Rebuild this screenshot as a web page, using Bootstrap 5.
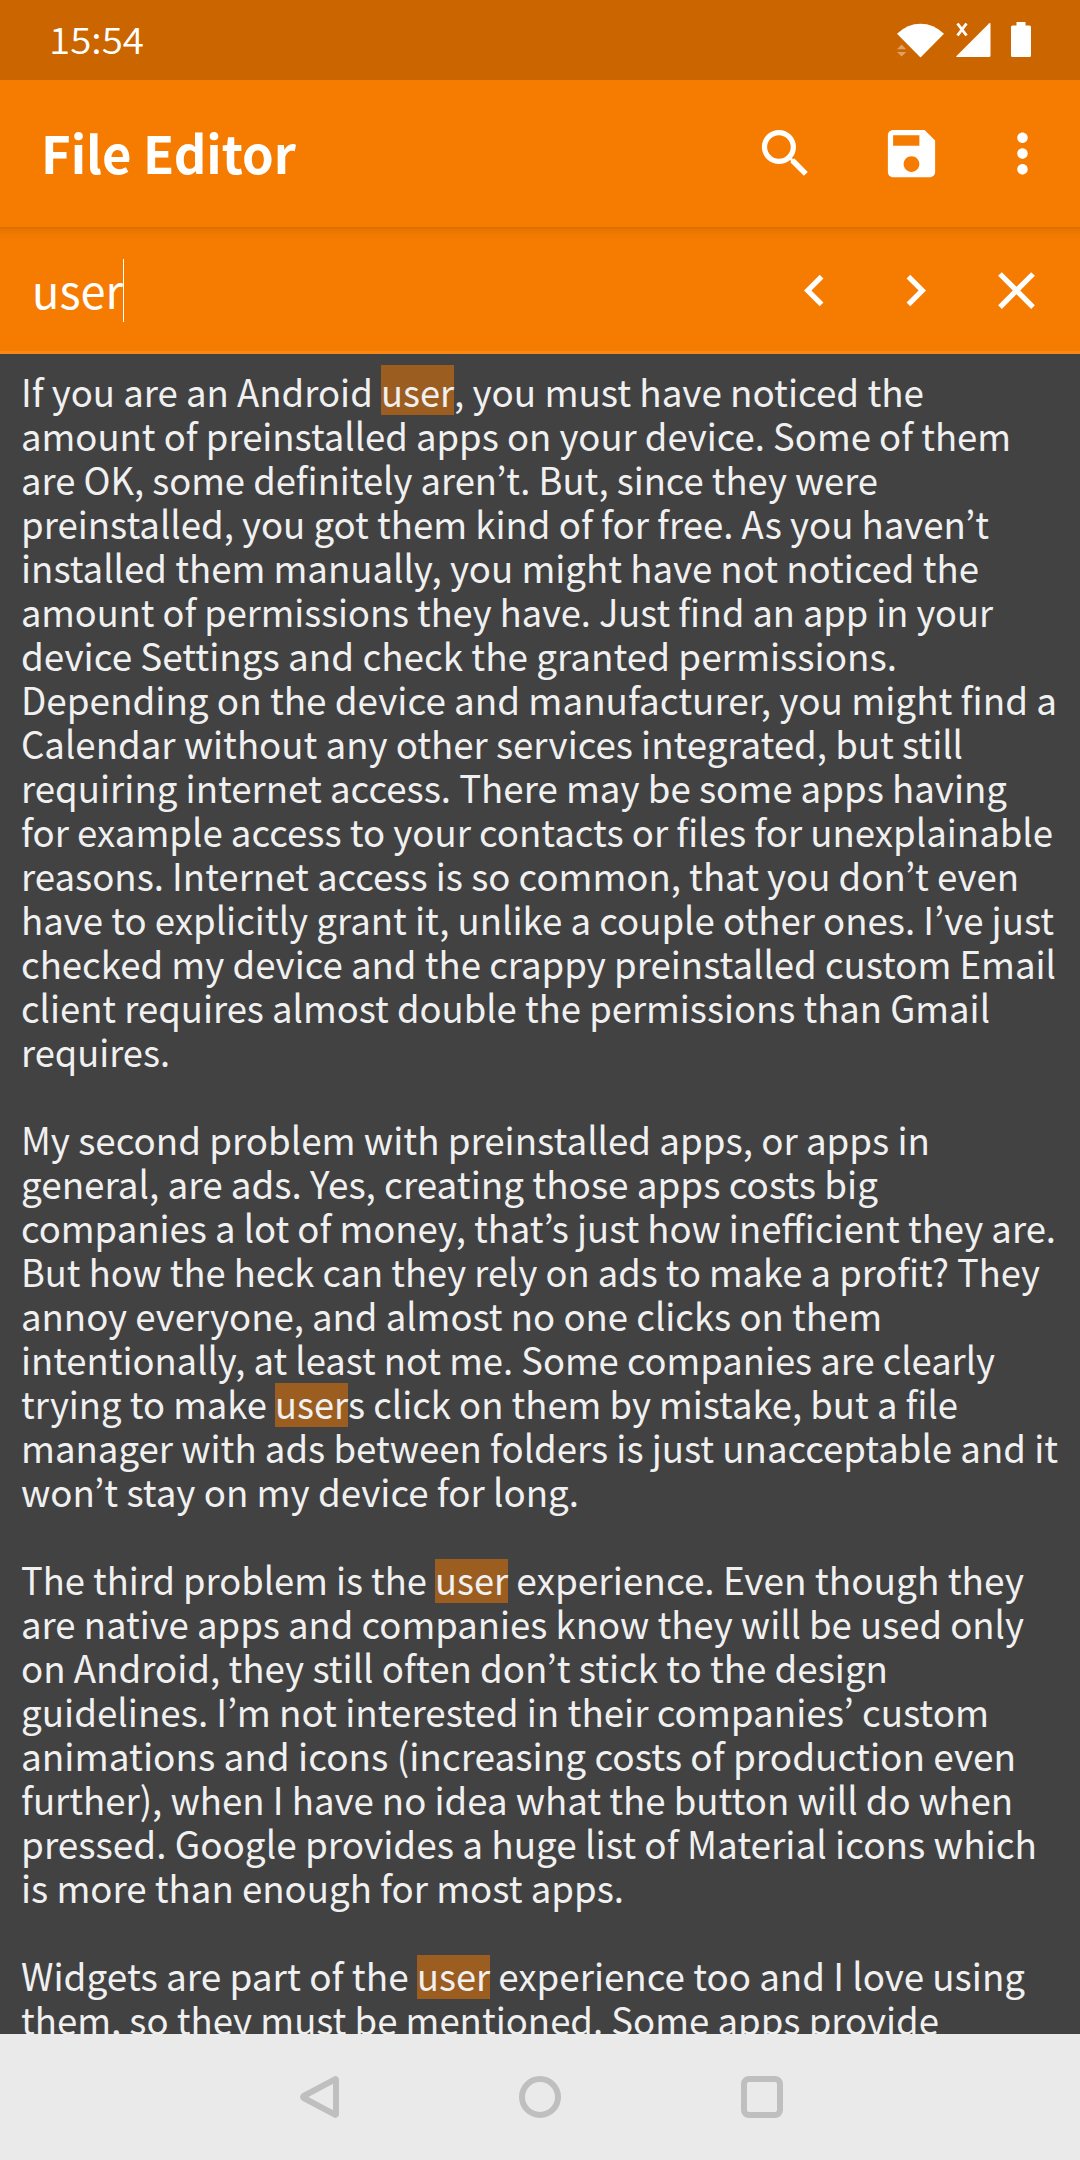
<!DOCTYPE html>
<html lang="en">
<head>
<meta charset="utf-8">
<meta name="viewport" content="width=device-width, initial-scale=1">
<title>File Editor</title>
<link href="https://cdn.jsdelivr.net/npm/bootstrap@5.3.0/dist/css/bootstrap.min.css" rel="stylesheet">
<style>
body { font-family: "Noto Sans CJK KR", "Noto Sans", sans-serif; background: #424242; color: #fff; }
.phone { width: 1080px; height: 2160px; }
svg { display: block; fill: #fff; flex: none; }
.status-bar { height: 80px; background: #ca6500; padding: 0 48px 0 49px; }
.clock { font-size: 37px; line-height: 77px; font-weight: 350; }
.app-bar { height: 147px; background: #f57c00; padding: 0 26px 0 41px; }
.app-title { font-size: 51.5px; line-height: 144px; font-weight: 700; padding-bottom: 3px; }
.app-actions { gap: 63px; }
.app-actions .more { margin-left: -15px; }
.find-bar { height: 127px; background: linear-gradient(#dc6f00, #e87500 3px, #f17a00 8px, #f57c00 13px, #f57c00 124px, #fa8817 124px); padding: 0 32px 0 32px; }
.query { font-size: 46px; line-height: 61px; padding-bottom: 2px; }
.caret { width: 1px; height: 63px; background: #fff; }
.find-actions { gap: 38px; padding-bottom: 1px; }
.tool { background: none; border: 0; padding: 0; }
.doc { min-height: 0; background: #424242; color: #f0f0f0; font-size: 37.7px; line-height: 40px; padding: 17px 0 0 21px; }
.ln { display: flex; white-space: pre; height: 44px; flex: none; }
.fit > span { display: inline-block; transform-origin: 0 50%; white-space: pre; }
.fit { flex: none; }
.hit { background: #9b5d20; }
.hit-first { box-shadow: 0 -6px #9b5d20; }
.nav-bar { height: 126px; background: #eaeaea; padding: 0 294px 0 297px; }
.nav-bar svg { fill: none; stroke: #bfbfbf; stroke-width: 6; stroke-linejoin: round; }
.nav-bar .home { margin-right: 3px; }
</style>
</head>
<body>
<div class="phone d-flex flex-column overflow-hidden">
  <header class="status-bar d-flex justify-content-between flex-shrink-0">
    <div class="clock fit" data-w="95">15:54</div>
    <svg width="136" height="80" viewBox="896 0 136 80" aria-hidden="true">
      <path d="M897 33.7Q907.500 23.800 920.500 23.800T944 33.700L920.500 57.500z"/>
      <path d="M897 49.200l4.600-4.700 4.600 4.700zM897 52l4.600 4.600 4.600-4.600z" fill-opacity=".4"/>
      <path d="M957.500 23.500l9 12m0-12l-9 12" stroke="#fff" stroke-width="2.900"/>
      <path d="M990.500 24v31.500q0 1.500-1.500 1.500h-32q-1.500 0-.5-1l32.500-32.500q1.500-1 1.500.500z"/>
      <path d="M1016.500 22h9v3.500h4q1.500 0 1.500 1.500v28.500q0 1.500-1.500 1.500h-17q-1.500 0-1.500-1.500v-28.500q0-1.500 1.500-1.500h4z"/>
    </svg>
  </header>

  <nav class="app-bar d-flex align-items-center justify-content-between flex-shrink-0">
    <div class="app-title fit" data-w="255">File Editor</div>
    <div class="app-actions d-flex align-items-center">
      <button class="tool" aria-label="Search"><svg width="63" height="63" viewBox="0 0 24 24"><path d="M15.500 14h-.79l-.28-.27C15.410 12.590 16 11.110 16 9.500 16 5.910 13.090 3 9.500 3S3 5.910 3 9.500 5.910 16 9.500 16c1.610 0 3.090-.59 4.230-1.570l.27.28v.79l5 4.990L20.490 19l-4.990-5zm-6 0C7.010 14 5 11.990 5 9.500S7.010 5 9.500 5 14 7.010 14 9.500 11.990 14 9.500 14z"/></svg></button>
      <button class="tool" aria-label="Save"><svg width="63" height="63" viewBox="0 0 24 24"><path d="M17 3H5c-1.110 0-2 .9-2 2v14c0 1.100.89 2 2 2h14c1.100 0 2-.9 2-2V7l-4-4zm-5 16c-1.660 0-3-1.340-3-3s1.340-3 3-3 3 1.340 3 3-1.340 3-3 3zm3-10H5V5h10v4z"/></svg></button>
      <button class="tool more" aria-label="More options"><svg width="63" height="63" viewBox="0 0 24 24"><path d="M12 8c1.100 0 2-.9 2-2s-.9-2-2-2-2 .9-2 2 .9 2 2 2zm0 2c-1.100 0-2 .9-2 2s.9 2 2 2 2-.9 2-2-.9-2-2-2zm0 6c-1.100 0-2 .9-2 2s.9 2 2 2 2-.9 2-2-.9-2-2-2z"/></svg></button>
    </div>
  </nav>

  <section class="find-bar d-flex align-items-center justify-content-between flex-shrink-0">
    <div class="d-flex align-items-center">
      <div class="query fit" data-w="91">user</div>
      <div class="caret"></div>
    </div>
    <div class="find-actions d-flex align-items-center">
      <button class="tool" aria-label="Previous"><svg width="63" height="63" viewBox="0 0 24 24"><path d="M15.410 7.410L14 6l-6 6 6 6 1.410-1.410L10.830 12z"/></svg></button>
      <button class="tool" aria-label="Next"><svg width="63" height="63" viewBox="0 0 24 24"><path d="M10 6L8.590 7.410 13.170 12l-4.580 4.590L10 18l6-6z"/></svg></button>
      <button class="tool" aria-label="Close"><svg width="63" height="63" viewBox="0 0 24 24"><path d="M19 6.410L17.590 5 12 10.590 6.410 5 5 6.410 10.590 12 5 17.590 6.410 19 12 13.410 17.590 19 19 17.590 13.410 12z"/></svg></button>
    </div>
  </section>

  <main class="doc d-flex flex-column flex-grow-1 overflow-hidden">
    <div class="ln"><span class="fit" data-w="360">If you are an Android </span><span class="fit hit hit-first" data-w="73">user</span><span class="fit" data-w="470">, you must have noticed the</span></div>
    <div class="ln"><span class="fit" data-w="990">amount of preinstalled apps on your device. Some of them</span></div>
    <div class="ln"><span class="fit" data-w="857">are OK, some definitely aren’t. But, since they were</span></div>
    <div class="ln"><span class="fit" data-w="968">preinstalled, you got them kind of for free. As you haven’t</span></div>
    <div class="ln"><span class="fit" data-w="958">installed them manually, you might have not noticed the</span></div>
    <div class="ln"><span class="fit" data-w="972">amount of permissions they have. Just find an app in your</span></div>
    <div class="ln"><span class="fit" data-w="876">device Settings and check the granted permissions.</span></div>
    <div class="ln"><span class="fit" data-w="1036">Depending on the device and manufacturer, you might find a</span></div>
    <div class="ln"><span class="fit" data-w="942">Calendar without any other services integrated, but still</span></div>
    <div class="ln"><span class="fit" data-w="986">requiring internet access. There may be some apps having</span></div>
    <div class="ln"><span class="fit" data-w="1032">for example access to your contacts or files for unexplainable</span></div>
    <div class="ln"><span class="fit" data-w="998">reasons. Internet access is so common, that you don’t even</span></div>
    <div class="ln"><span class="fit" data-w="1033">have to explicitly grant it, unlike a couple other ones. I’ve just</span></div>
    <div class="ln"><span class="fit" data-w="1035">checked my device and the crappy preinstalled custom Email</span></div>
    <div class="ln"><span class="fit" data-w="969">client requires almost double the permissions than Gmail</span></div>
    <div class="ln"><span class="fit" data-w="149">requires.</span></div>
    <div class="ln"></div>
    <div class="ln"><span class="fit" data-w="909">My second problem with preinstalled apps, or apps in</span></div>
    <div class="ln"><span class="fit" data-w="857">general, are ads. Yes, creating those apps costs big</span></div>
    <div class="ln"><span class="fit" data-w="1035">companies a lot of money, that’s just how inefficient they are.</span></div>
    <div class="ln"><span class="fit" data-w="1019">But how the heck can they rely on ads to make a profit? They</span></div>
    <div class="ln"><span class="fit" data-w="861">annoy everyone, and almost no one clicks on them</span></div>
    <div class="ln"><span class="fit" data-w="974">intentionally, at least not me. Some companies are clearly</span></div>
    <div class="ln"><span class="fit" data-w="254">trying to make </span><span class="fit hit" data-w="73">user</span><span class="fit" data-w="610">s click on them by mistake, but a file</span></div>
    <div class="ln"><span class="fit" data-w="1037">manager with ads between folders is just unacceptable and it</span></div>
    <div class="ln"><span class="fit" data-w="558">won’t stay on my device for long.</span></div>
    <div class="ln"></div>
    <div class="ln"><span class="fit" data-w="414">The third problem is the </span><span class="fit hit" data-w="73">user</span><span class="fit" data-w="516"> experience. Even though they</span></div>
    <div class="ln"><span class="fit" data-w="1003">are native apps and companies know they will be used only</span></div>
    <div class="ln"><span class="fit" data-w="867">on Android, they still often don’t stick to the design</span></div>
    <div class="ln"><span class="fit" data-w="968">guidelines. I’m not interested in their companies’ custom</span></div>
    <div class="ln"><span class="fit" data-w="995">animations and icons (increasing costs of production even</span></div>
    <div class="ln"><span class="fit" data-w="992">further), when I have no idea what the button will do when</span></div>
    <div class="ln"><span class="fit" data-w="1016">pressed. Google provides a huge list of Material icons which</span></div>
    <div class="ln"><span class="fit" data-w="603">is more than enough for most apps.</span></div>
    <div class="ln"></div>
    <div class="ln"><span class="fit" data-w="396">Widgets are part of the </span><span class="fit hit" data-w="73">user</span><span class="fit" data-w="535"> experience too and I love using</span></div>
    <div class="ln"><span class="fit" data-w="918">them, so they must be mentioned. Some apps provide</span></div>
  </main>

  <footer class="nav-bar d-flex align-items-center justify-content-between flex-shrink-0">
    <svg width="48" height="48" viewBox="0 0 48 48"><path d="M38 6.300Q39 5.800 39 7.300v33.400q0 1.500-1 1L6.700 25Q5.700 24 6.700 23z"/></svg>
    <svg class="home" width="48" height="48" viewBox="0 0 48 48"><circle cx="24" cy="24" r="18"/></svg>
    <svg width="48" height="48" viewBox="0 0 48 48"><rect x="6" y="6" width="36" height="36" rx="5"/></svg>
  </footer>
</div>
<script src="https://cdn.jsdelivr.net/npm/bootstrap@5.3.0/dist/js/bootstrap.bundle.min.js"></script>
<script>
// Condense each run of text to its measured advance width.
document.querySelectorAll('.fit').forEach(function (el) {
  var inner = document.createElement('span');
  inner.textContent = el.textContent;
  el.replaceChildren(inner);
  var natural = inner.getBoundingClientRect().width;
  var target = Number(el.dataset.w);
  el.style.width = target + 'px';
  inner.style.transform = 'scaleX(' + target / natural + ')';
});
</script>
</body>
</html>
